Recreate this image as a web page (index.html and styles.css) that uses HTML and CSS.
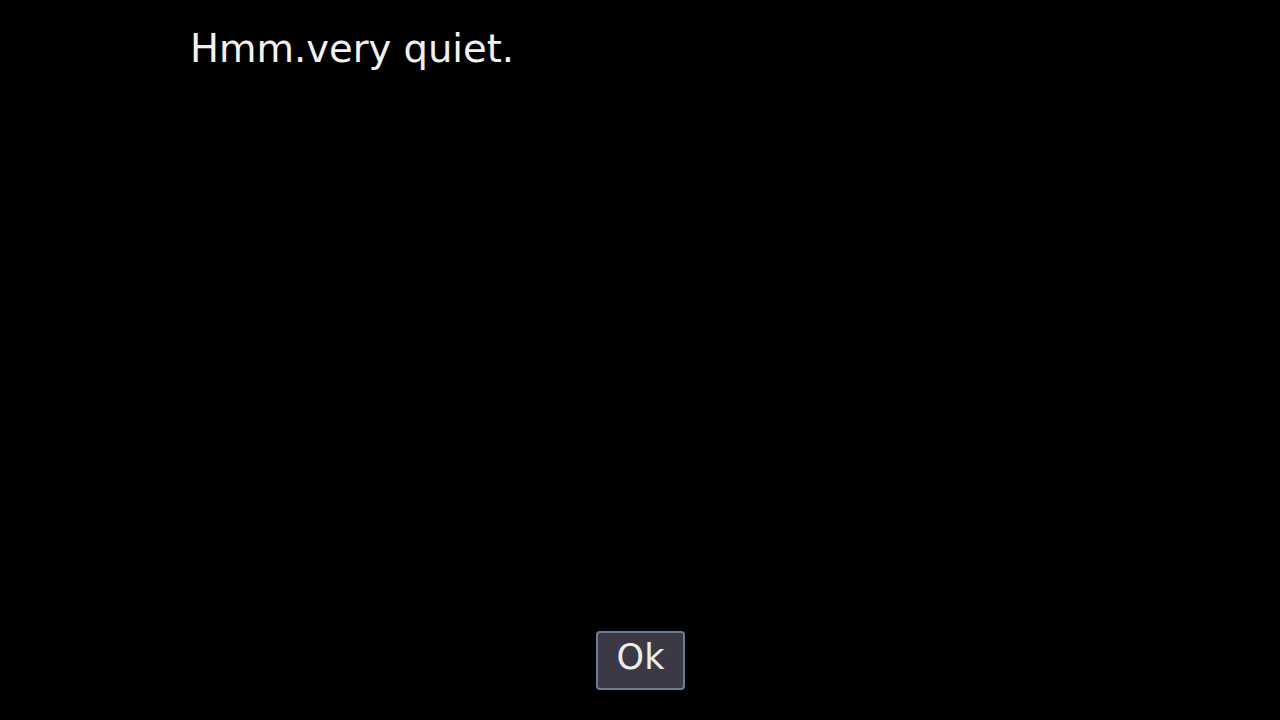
FILE: index.html
```html
<!DOCTYPE html>
<html>
<head>
<meta charset="utf-8">
<link rel="stylesheet" href="styles.css">
</head>
<body>
<div class="screen">
  <p class="message">Hmm.very quiet.</p>
  <div class="actions">
    <button class="ok">Ok</button>
  </div>
</div>
</body>
</html>
```

FILE: styles.css
```css
html, body {
  margin: 0;
  padding: 0;
  background: #000;
}
.screen {
  width: 1280px;
  height: 720px;
  display: flex;
  flex-direction: column;
  font-family: "DejaVu Sans", sans-serif;
  color: #f2f2f2;
}
.message {
  margin: 0;
  padding: 26px 0 0 190px;
  font-size: 38.5px;
  line-height: 45px;
  flex: 1;
}
.actions {
  display: flex;
  justify-content: center;
  padding-bottom: 30px;
}
.ok {
  width: 89px;
  height: 59px;
  box-sizing: border-box;
  background: #3b3946;
  border: 2px solid #6b7e98;
  border-radius: 4px;
  color: #ececec;
  font-family: "DejaVu Sans", sans-serif;
  font-size: 35px;
  padding: 0 0 6px 1px;
  line-height: 1;
}
```
